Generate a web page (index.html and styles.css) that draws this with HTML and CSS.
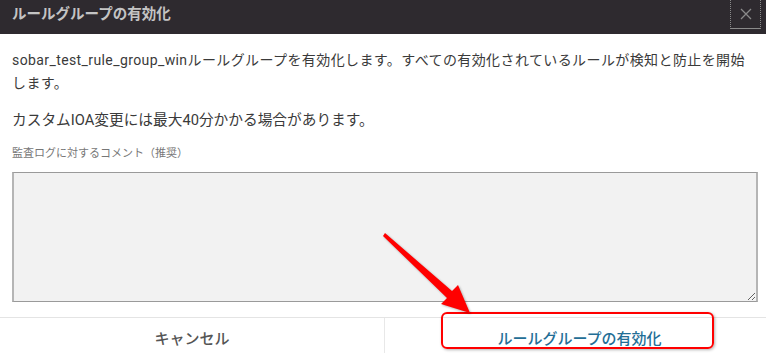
FILE: index.html
```html
<!DOCTYPE html>
<html>
<head>
  <link rel="stylesheet" href="styles.css">
</head>
<body>
  <div class="modal">
    <div class="modal-header">
      <h2>ルールグループの有効化</h2>
      <button class="close-btn" aria-label="閉じる">
        <svg width="12" height="12" viewBox="0 0 12 12">
          <path d="M1 1 L11 11 M11 1 L1 11" stroke="#8a8a8a" stroke-width="1.3" fill="none"/>
        </svg>
      </button>
    </div>

    <div class="modal-body">
      <p class="lead">sobar_test_rule_group_winルールグループを有効化します。すべての有効化されているルールが検知と防止を開始します。</p>
      <p class="note">カスタムIOA変更には最大40分かかる場合があります。</p>
      <label class="field-label" for="auditComment">監査ログに対するコメント（推奨）</label>
      <textarea id="auditComment" class="comment"></textarea>
    </div>

    <div class="modal-footer">
      <button class="footer-btn cancel-btn">キャンセル</button>
      <button class="footer-btn confirm-btn">ルールグループの有効化</button>
    </div>

    <!-- annotation overlay -->
    <div class="highlight"></div>
    <svg class="arrow" width="766" height="353" viewBox="0 0 766 353">
      <polygon points="383,236 385,233 452,291 458,285 470,313 441,304 447,298" fill="#f00"/>
    </svg>
  </div>
</body>
</html>
```

FILE: styles.css
```css
body {
  margin: 0;
  background: #fff;
  font-family: Roboto, "Noto Sans CJK JP", sans-serif;
  color: #3a3a3a;
}
.modal {
  position: relative;
  width: 766px;
  height: 353px;
  overflow: hidden;
}
.modal-header {
  display: flex;
  align-items: flex-start;
  justify-content: space-between;
  height: 34px;
  background: #2e2a2f;
  padding-left: 12px;
}
.modal-header h2 {
  margin: 0;
  font-size: 14.5px;
  line-height: 30px;
  font-weight: 700;
  color: #c4c4c4;
}
.close-btn {
  display: flex;
  align-items: center;
  justify-content: center;
  width: 31px;
  height: 29px;
  margin-right: 5px;
  padding: 0;
  background: transparent;
  border: 1px dotted #8a8a8a;
  border-top: none;
  border-bottom: 1px solid #8a8a8a;
  cursor: pointer;
}
.modal-body {
  padding: 15px 8px 0 12px;
}
.lead {
  margin: 0;
  font-size: 14px;
  line-height: 23px;
  letter-spacing: 0.4px;
}
.note {
  margin: 14px 0 0 0;
  font-size: 14.7px;
  line-height: 23px;
}
.field-label {
  display: block;
  margin-top: 14px;
  font-size: 11px;
  line-height: 16px;
  color: #777;
}
.comment {
  display: block;
  box-sizing: border-box;
  width: 746px;
  height: 130px;
  margin-top: 10px;
  background: #f2f2f2;
  border: 1px solid #9a9a9a;
  border-left: 2px solid #b5b5b5;
  border-right: 2px solid #b5b5b5;
  border-radius: 0;
}
.modal-footer {
  display: flex;
  margin-top: 15px;
  border-top: 1px solid #e4e4e4;
}
.footer-btn {
  flex: 1;
  height: 38px;
  padding: 0;
  background: #fff;
  border: none;
  font-family: Roboto, "Noto Sans CJK JP", sans-serif;
  font-size: 15px;
  font-weight: 500;
  cursor: pointer;
}
.cancel-btn {
  flex: 0 0 385px;
  color: #555;
  border-right: 1px solid #e8e8e8;
}
.confirm-btn {
  padding-left: 8px;
  color: #236e96;
}
.highlight {
  position: absolute;
  left: 441px;
  top: 312px;
  width: 269px;
  height: 33px;
  border: 2px solid #f00;
  border-radius: 6px;
  box-shadow: 1px 1px 3px rgba(0, 0, 0, 0.3);
}
.arrow {
  position: absolute;
  left: 0;
  top: 0;
  pointer-events: none;
  filter: drop-shadow(1px 1px 1px rgba(0, 0, 0, 0.3));
}
```
